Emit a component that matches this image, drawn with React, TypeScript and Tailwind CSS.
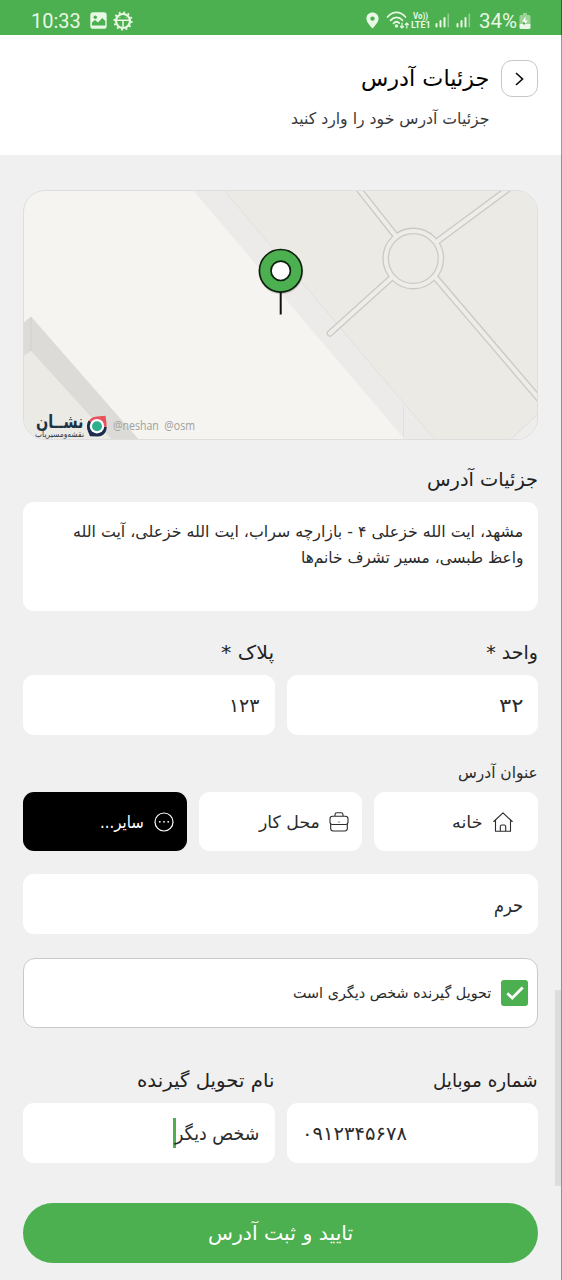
import { useLayoutEffect, useRef, useState, type ReactNode } from "react";

/** Single line of text condensed or widened horizontally to an exact width. */
function Fit({ w, ltr = false, className = "", children }: { w: number; ltr?: boolean; className?: string; children: ReactNode }) {
  const ref = useRef<HTMLSpanElement>(null);
  const [scale, setScale] = useState(1);
  useLayoutEffect(() => {
    if (ref.current) setScale(w / ref.current.offsetWidth);
  }, [w]);
  return (
    <span className={`flex shrink-0 justify-start whitespace-nowrap ${className}`} style={{ width: w }}>
      <span ref={ref} className={`inline-block shrink-0 ${ltr ? "origin-left" : "origin-right"}`} style={{ transform: `scaleX(${scale})` }}>
        {children}
      </span>
    </span>
  );
}

function Bars() {
  return (
    <svg className="h-[15px] w-[15px]" viewBox="0 0 15 15" fill="#e9f8e4">
      <rect x="0.5" y="10" width="2" height="4.5" rx="1" />
      <rect x="4.5" y="7" width="2" height="7.5" rx="1" />
      <rect x="8.5" y="4" width="2" height="10.5" rx="1" />
      <rect x="12.5" y="0.5" width="1.6" height="14" rx=".8" opacity=".45" />
    </svg>
  );
}

function StatusBar() {
  return (
    <div dir="ltr" className="flex h-[35px] items-center bg-[#4caf50] pt-[6px] pl-[31px] font-['Roboto',sans-serif] text-[20px] leading-[24px] text-[#e9f8e4]">
      <Fit ltr w={50}>10:33</Fit>
      <svg className="ml-[9px] h-[17px] w-[17px]" viewBox="0 0 17 17">
        <rect x=".3" y=".3" width="16.4" height="16.4" rx="2.8" fill="#e9f8e4" />
        <circle cx="5.3" cy="5.3" r="1.7" fill="#4caf50" />
        <path d="M2 13.500V10.500l3-2.600 3 2.600 4.300-4.600 3 3.200v4.400z" fill="#4caf50" />
      </svg>
      <svg className="ml-[6px] h-[20px] w-[20px]" viewBox="0 0 20 20" fill="none" stroke="#e9f8e4">
        <circle cx="10" cy="10" r="7" strokeWidth="2.2" />
        <circle cx="10" cy="10" r="8.7" strokeWidth="1.8" strokeDasharray="1.9 2.65" />
        <path d="M3.5 9.2h13M10 9.5v8" strokeWidth="1.5" />
        <path d="M6.5 6.5h.8M12.7 6.5h.8" strokeWidth="1.1" />
      </svg>
      <svg className="ml-[233px] h-[17px] w-[13px]" viewBox="0 0 13 17">
        <path fillRule="evenodd" d="M6.5.5C3 .5.4 3.1.4 6.5.4 10.8 6.5 16.5 6.5 16.5s6.1-5.7 6.1-10C12.600 3.100 10 .5 6.500.5zm0 3.900a2.200 2.200 0 1 1 0 4.400 2.200 2.200 0 0 1 0-4.400z" fill="#e9f8e4" />
      </svg>
      <svg className="ml-[7px] h-[19px] w-[24px]" viewBox="0 0 24 19" fill="none" stroke="#e9f8e4" strokeWidth="1.700" strokeLinecap="round">
        <path d="M1.500 6C7-.2 14-.2 19.500 6M4.500 9.300c3.700-4 8.500-4 12 0M7.500 12.300c2-2 4-2 5.800-.2" />
        <circle cx="10.500" cy="15" r=".9" fill="#e9f8e4" />
        <path d="M16 12v5m-1.500-1.500L16 17l1.500-1.500M20.800 17v-5m-1.500 1.500 1.500-1.500 1.500 1.500" strokeWidth="1.200" />
      </svg>
      <div className="ml-px flex w-[20px] flex-col text-[9px] leading-[8.500px] font-bold">
        <Fit ltr w={15} className="ml-[2px]">Vo))</Fit>
        <Fit ltr w={20}>LTE1</Fit>
      </div>
      <div className="ml-[4px] flex gap-[6px]"><Bars /><Bars /></div>
      <Fit ltr w={38} className="ml-[8px]">34%</Fit>
      <svg className="ml-[2px] h-[16px] w-[12px]" viewBox="0 0 12 16">
        <path d="M4 0h4v2h2a1.500 1.500 0 0 1 1.500 1.500V10H.5V3.500A1.500 1.500 0 0 1 2 2h2z" fill="#9bd397" />
        <path d="M.5 10.500h11v4a1.500 1.500 0 0 1-1.500 1.500H2a1.500 1.500 0 0 1-1.500-1.500z" fill="#e9f8e4" />
        <path d="M6.800 3.500 3.200 8.500h2.400L5 12l3.900-4.500H6.300z" fill="#fff" />
        <path d="M4.200 9.800 6 9.800 5.200 12.600z" fill="#2f7a33" />
      </svg>
    </div>
  );
}

function MapCard() {
  const roads = "M358.700 189 395.300 235.300M508 189 437.700 241M435.300 277.300 540 400M391 278.300 330 333.300";
  return (
    <div className="relative h-[250px] overflow-hidden rounded-[22px] border border-[#dedede] bg-[#f5f4f0]">
      <svg className="block h-full w-full" viewBox="24 191 513 248">
        <path d="M192 189h32l212 252h-30z" fill="#ecebe9" />
        <path d="M223 189h317v252H436z" fill="#ebeae5" />
        <path d="M223 189 436 441M403.500 406v32" stroke="#e1e0de" fill="none" />
        <path d="M510 440 540 412V440z" fill="#eeedeb" stroke="#dddcd9" />
        <path d="M22 357 31 351 114 441H22z" fill="#ebeae5" />
        <path d="M22 324 31 316.500 140 441H113L31 351 22 357z" fill="#dddbd7" />
        <path d="M31 317v34" stroke="#d3d0cd" />
        <path d={roads} stroke="#cbcac5" strokeWidth="6.800" strokeLinecap="round" />
        <circle cx="413.300" cy="258.500" r="27.600" fill="none" stroke="#cbcac5" strokeWidth="6.600" />
        <path d={roads} stroke="#eeede9" strokeWidth="4.100" strokeLinecap="round" />
        <circle cx="413.300" cy="258.500" r="27.600" fill="none" stroke="#eeede9" strokeWidth="4" />
        <path d="M280.700 292v22.500" stroke="#111" strokeWidth="2" />
        <circle cx="281" cy="272" r="22.300" fill="#000" opacity=".15" />
        <circle cx="280.700" cy="270.800" r="21.300" fill="#4caf50" stroke="#0d1f0d" strokeWidth="1.700" />
        <circle cx="280.700" cy="270.800" r="9.700" fill="#fff" stroke="#0d1f0d" strokeWidth="1.700" />
      </svg>
      <div dir="ltr" className="absolute bottom-0 left-[10px] flex h-[27px] items-center">
        <div dir="rtl" className="flex w-[50px] flex-col font-['DejaVu_Sans',sans-serif] text-[#1d3345]">
          <Fit w={48} className="text-[18px] leading-[17px] font-bold">نشــان</Fit>
          <Fit w={49} className="text-[8px] leading-[9px]">نقشه‌ومسیریاب</Fit>
        </div>
        <svg className="ml-[2px] h-[22px] w-[22px]" viewBox="0 0 22 22">
          <path d="M2 8C3.500 3.500 7 1.800 11 1.500L19.500.8 20.500 8 20.500 12H2z" fill="#e8505b" />
          <path d="M2.500 5.500C.5 9 .5 13 2 16.500L4 21.200 12 21.500c5 0 8.700-4 8.700-9.500L11 12z" fill="#1c2c4c" />
          <circle cx="11" cy="11.200" r="7.200" fill="#fff" />
          <circle cx="11" cy="11.200" r="5" fill="#2fb08c" />
        </svg>
        <Fit ltr w={82} className="ml-[5px] font-['Open_Sans',sans-serif] text-[12px] leading-[16px] text-[#a09f9d]">@neshan&nbsp; @osm</Fit>
      </div>
    </div>
  );
}

function Field({ label, labelWidth, children }: { label: string; labelWidth: number; children: ReactNode }) {
  return (
    <div className="flex flex-col">
      <Fit w={labelWidth} className="text-[19px] leading-[24px] text-[#222]">{label}</Fit>
      <div className="mt-[11px] flex h-[60px] items-center rounded-[11px] bg-white px-[15px] text-[19px] leading-[28px]">{children}</div>
    </div>
  );
}

function Option({ icon, label, w, active = false, pad }: { icon: ReactNode; label: string; w: number; active?: boolean; pad: string }) {
  return (
    <div className={`flex h-[59px] items-center gap-[10px] rounded-[11px] ${pad} ${active ? "bg-black text-white" : "bg-white text-[#2b2b2b]"}`}>
      {icon}
      <Fit w={w} className="text-[17px] leading-[24px]">{label}</Fit>
    </div>
  );
}

export default function App() {
  return (
    <div dir="rtl" className="relative flex h-[1280px] w-[562px] flex-col overflow-hidden bg-[#f0f0f0] font-['DejaVu_Sans',sans-serif] text-[#2b2b2b]">
      <StatusBar />
      <header className="flex h-[120px] gap-[12px] bg-white pt-[25px] pr-[24px]">
        <button className="flex h-[37px] w-[37px] items-center justify-center rounded-[11px] border-[1.500px] border-[#c8c8c8]">
          <svg className="h-[14px] w-[9px]" viewBox="0 0 9 14" fill="none" stroke="#111" strokeWidth="1.700">
            <path d="M1 1l6.500 6L1 13" />
          </svg>
        </button>
        <div className="flex flex-col">
          <Fit w={128} className="mt-[4px] text-[22px] leading-[30px] text-black">جزئیات آدرس</Fit>
          <Fit w={198} className="mt-[13px] text-[16px] leading-[24px] text-[#3a3a3a]">جزئیات آدرس خود را وارد کنید</Fit>
        </div>
      </header>
      <main className="flex flex-col pt-[35px] pr-[24px] pl-[23px]">
        <MapCard />
        <Fit w={111} className="mt-[27px] text-[19px] leading-[24px] text-[#222]">جزئیات آدرس</Fit>
        <div className="mt-[11px] flex h-[109px] flex-col rounded-[11px] bg-white px-[15px] pt-[17px] text-[16px] leading-[26px]">
          <Fit w={450}>مشهد، ایت الله خزعلی ۴ - بازارچه سراب، ایت الله خزعلی، آیت الله</Fit>
          <Fit w={222}>واعظ طبسی، مسیر تشرف خانم‌ها</Fit>
        </div>
        <div className="mt-[29px] grid grid-cols-2 gap-[12px]">
          <Field label="واحد *" labelWidth={52}><Fit w={24}>۳۲</Fit></Field>
          <Field label="پلاک *" labelWidth={53}><Fit w={31}>۱۲۳</Fit></Field>
        </div>
        <Fit w={80} className="mt-[26px] text-[16px] leading-[24px]">عنوان آدرس</Fit>
        <div className="mt-[7px] grid grid-cols-3 gap-[12px]">
          <Option
            pad="pr-[25px]"
            label="خانه"
            w={31}
            icon={
              <svg className="h-[20px] w-[20px]" viewBox="0 0 20 20" fill="none" stroke="#2b2b2b" strokeWidth="1.100" strokeLinejoin="round" strokeLinecap="round">
                <path d="M.8 9.500 10 .8l9.200 8.700M2.500 8.200v11h15v-11M7.300 19v-4.500q0-1.500 1.500-1.500h2.400q1.500 0 1.500 1.500V19" />
              </svg>
            }
          />
          <Option
            pad="pr-[13px]"
            label="محل کار"
            w={61}
            icon={
              <svg className="h-[20px] w-[20px]" viewBox="0 0 20 20" fill="none" stroke="#2b2b2b" strokeWidth="1.100">
                <rect x="1" y="4.200" width="18" height="8.300" rx="2.500" />
                <path d="M6 4V2.500Q6 .8 8 .8h4q2 0 2 1.700V4M1.700 12v4.500q0 2.500 2.500 2.500h11.600q2.500 0 2.500-2.500V12M10 9.600v.9" />
              </svg>
            }
          />
          <Option
            pad="pr-[13px]"
            label="سایر..."
            w={44}
            active
            icon={
              <svg className="h-[20px] w-[20px]" viewBox="0 0 20 20" fill="#fff">
                <circle cx="10" cy="10" r="9" fill="none" stroke="#fff" strokeWidth="1.200" />
                <circle cx="5.800" cy="9.800" r=".9" /><circle cx="10" cy="9.800" r=".9" /><circle cx="14.200" cy="9.800" r=".9" />
              </svg>
            }
          />
        </div>
        <div className="mt-[23px] flex h-[60px] items-center rounded-[11px] bg-white px-[15px] pt-[2px] text-[19px] leading-[28px]">
          <Fit w={29}>حرم</Fit>
        </div>
        <div className="mt-[24px] flex h-[70px] items-center gap-[10px] rounded-[12px] border-[1.500px] border-[#c9c9c9] bg-white pr-[9px]">
          <span className="flex h-[26px] w-[27px] items-center justify-center rounded-[3px] bg-[#4caf50]">
            <svg className="h-[14px] w-[18px]" viewBox="0 0 18 14" fill="none" stroke="#fff" strokeWidth="2.800">
              <path d="M1.300 7.200 6.200 12 16.700 1.500" />
            </svg>
          </span>
          <Fit w={198} className="text-[15px] leading-[24px]">تحویل گیرنده شخص دیگری است</Fit>
        </div>
        <div className="mt-[40px] grid grid-cols-2 gap-[12px]">
          <Field label="شماره موبایل" labelWidth={105}>
            <div dir="ltr" className="flex w-full"><Fit ltr w={105}>۰۹۱۲۳۴۵۶۷۸</Fit></div>
          </Field>
          <Field label="نام تحویل گیرنده" labelWidth={137}>
            <Fit w={84}>شخص دیگر</Fit>
            <span className="h-[30px] w-[3px] bg-[#4caf50]" />
          </Field>
        </div>
        <button className="mt-[40px] flex h-[60px] items-center justify-center rounded-full bg-[#4caf50] text-[20px] leading-[28px] text-white">
          <Fit w={145}>تایید و ثبت آدرس</Fit>
        </button>
      </main>
      <div className="absolute top-[990px] right-px h-[196px] w-[6px] bg-[#dddddd]" />
      <div className="absolute top-0 right-0 h-full w-px bg-black/40" />
    </div>
  );
}
